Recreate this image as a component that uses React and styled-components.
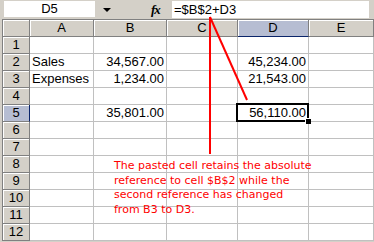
import React from 'react';
import styled, { createGlobalStyle } from 'styled-components';

const Global = createGlobalStyle`
  html, body { margin: 0; padding: 0; background: #d4d0c8; }
  body { font-family: "Liberation Sans", Arial, sans-serif; }
`;

const Window = styled.div`
  position: relative;
  width: 374px;
  height: 242px;
  overflow: hidden;
  background: #d4d0c8;
`;

const FormulaBar = styled.div`
  display: flex;
  align-items: center;
  height: 19px;
  padding-left: 4px;
  box-sizing: border-box;
`;

const NameBox = styled.div`
  width: 91px;
  height: 16px;
  margin-top: 1px;
  align-self: flex-start;
  background: #fff;
  font-size: 13px;
  line-height: 16px;
  text-align: center;
`;

const Drop = styled.div`
  width: 0;
  height: 0;
  margin-left: 8px;
  border-left: 4px solid transparent;
  border-right: 4px solid transparent;
  border-top: 4px solid #000;
`;

const Fx = styled.div`
  margin-left: 40px;
  width: 18px;
  font-family: "Liberation Serif", "Times New Roman", serif;
  font-style: italic;
  font-weight: bold;
  font-size: 13px;
  letter-spacing: -1px;
`;

const Input = styled.div`
  align-self: flex-start;
  margin-left: 3px;
  margin-top: 1px;
  width: 197px;
  height: 17px;
  background: #fff;
  font-size: 13px;
  line-height: 17px;
  padding-left: 2px;
  box-sizing: border-box;
`;

const Sheet = styled.div`
  margin-left: 2px;
  border-top: 1px solid #808080;
  border-left: 1px solid #808080;
  display: grid;
  grid-template-columns: 27px 64px 73px 71px 71px 65px;
  grid-auto-rows: 17px;
  background: #fff;
`;

const Head = styled.div`
  box-sizing: border-box;
  background: ${({ active }) => (active ? '#b6bdd2' : '#d4d0c8')};
  border-right: 1px solid ${({ active, side }) => (active && side ? '#0a246a' : '#808080')};
  border-bottom: 1px solid ${({ active, side }) => (active && !side ? '#0a246a' : '#808080')};
  box-shadow: inset 1px 1px 0 #fff;
  font-size: 13px;
  line-height: 16px;
  text-align: center;
  color: #000;
`;

const Cell = styled.div`
  position: relative;
  box-sizing: border-box;
  border-right: 1px solid #c0c0c0;
  border-bottom: 1px solid #c0c0c0;
  font-size: 13px;
  line-height: 16px;
  padding: 0 2px;
  text-align: ${({ num }) => (num ? 'right' : 'left')};
  white-space: nowrap;
`;

const Selected = styled.div`
  position: absolute;
  z-index: 2;
  left: -2px;
  top: -2px;
  right: -1px;
  bottom: -1px;
  border: 2px solid #000;
  pointer-events: none;
  &::after {
    content: '';
    position: absolute;
    right: -4px;
    bottom: -4px;
    width: 5px;
    height: 5px;
    background: #000;
    border-left: 1px solid #fff;
    border-top: 1px solid #fff;
  }
`;

const Note = styled.div`
  position: absolute;
  left: 114px;
  top: 159px;
  font-family: "DejaVu Sans", Verdana, sans-serif;
  font-size: 11px;
  line-height: 14.6px;
  color: #ff0000;
`;

const Arrows = styled.svg`
  position: absolute;
  left: 0;
  top: 0;
  pointer-events: none;
`;

const cols = ['A', 'B', 'C', 'D', 'E'];
const data = {
  2: ['Sales', '34,567.00', '', '45,234.00', ''],
  3: ['Expenses', '1,234.00', '', '21,543.00', ''],
  5: ['', '35,801.00', '', '56,110.00', ''],
};

export default function App() {
  const rows = Array.from({ length: 12 }, (_, i) => i + 1);
  return (
    <Window>
      <Global />
      <FormulaBar>
        <NameBox>D5</NameBox>
        <Drop />
        <Fx>fx</Fx>
        <Input>=$B$2+D3</Input>
      </FormulaBar>
      <Sheet>
        <Head />
        {cols.map((c) => (
          <Head key={c} active={c === 'D'}>{c}</Head>
        ))}
        {rows.map((r) => (
          <React.Fragment key={r}>
            <Head side active={r === 5}>{r}</Head>
            {cols.map((c, i) => {
              const v = data[r] ? data[r][i] : '';
              return (
                <Cell key={c} num={i > 0}>
                  {v}
                  {r === 5 && c === 'D' && <Selected />}
                </Cell>
              );
            })}
          </React.Fragment>
        ))}
      </Sheet>
      <Arrows width="374" height="242">
        <line x1="210" y1="17" x2="210" y2="154" stroke="#ff0000" strokeWidth="2" />
        <line x1="210" y1="17" x2="247" y2="100" stroke="#ff0000" strokeWidth="2" />
      </Arrows>
      <Note>
        The pasted cell retains the absolute<br />
        reference to cell $B$2 while the<br />
        second reference has changed<br />
        from B3 to D3.
      </Note>
    </Window>
  );
}
